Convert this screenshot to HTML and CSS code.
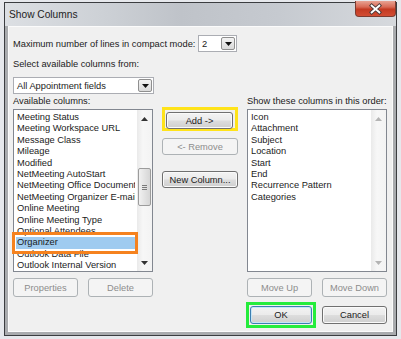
FILE: index.html
```html
<!DOCTYPE html>
<html lang="en">
<head>
    <meta charset="UTF-8">
    <meta name="viewport" content="width=device-width, initial-scale=1.0">
    <title>Show Columns</title>
    <link rel="stylesheet" href="styles.css">
</head>
<body>
    <div class="window">
        <div class="titlebar">
            <span class="title">Show Columns</span>
            <span class="close">
                <svg width="41" height="16" viewBox="0 0 41 16">
                    <path d="M16.5 4.5 L24.5 11.5 M24.5 4.5 L16.5 11.5" stroke="#4a3a3a" stroke-width="4" stroke-linecap="square"/>
                    <path d="M16.5 4.5 L24.5 11.5 M24.5 4.5 L16.5 11.5" stroke="#ffffff" stroke-width="2" stroke-linecap="square"/>
                </svg>
            </span>
        </div>

        <div class="client">
            <div class="compact-row">
                <span>Maximum number of lines in compact mode:</span>
                <div class="combo">
                    <span class="combo-text">2</span>
                    <span class="combo-btn"><svg width="7" height="4" viewBox="0 0 7 4"><path d="M0 0 H7 L3.5 4 Z" fill="#111"/></svg></span>
                </div>
            </div>

            <div class="caption caption-source">Select available columns from:</div>
            <div class="combo combo-wide">
                <span class="combo-text">All Appointment fields</span>
                <span class="combo-btn"><svg width="7" height="4" viewBox="0 0 7 4"><path d="M0 0 H7 L3.5 4 Z" fill="#111"/></svg></span>
            </div>

            <div class="columns">
                <div class="caption">Available columns:</div>
                <div></div>
                <div class="caption">Show these columns in this order:</div>

                <div class="listbox">
                    <ul class="items">
                        <li>Meeting Status</li>
                        <li>Meeting Workspace URL</li>
                        <li>Message Class</li>
                        <li>Mileage</li>
                        <li>Modified</li>
                        <li>NetMeeting AutoStart</li>
                        <li>NetMeeting Office Document</li>
                        <li>NetMeeting Organizer E-mail</li>
                        <li>Online Meeting</li>
                        <li>Online Meeting Type</li>
                        <li>Optional Attendees</li>
                        <li class="selected">Organizer</li>
                        <li>Outlook Data File</li>
                        <li>Outlook Internal Version</li>
                    </ul>
                    <div class="scrollbar">
                        <span class="arrow"><svg width="7" height="4" viewBox="0 0 7 4"><path d="M0 4 H7 L3.5 0 Z" fill="#333"/></svg></span>
                        <span class="track-top"></span>
                        <span class="thumb"><i></i><i></i><i></i></span>
                        <span class="track-rest"></span>
                        <span class="arrow"><svg width="7" height="4" viewBox="0 0 7 4"><path d="M0 0 H7 L3.5 4 Z" fill="#333"/></svg></span>
                    </div>
                    <div class="mark mark-orange"></div>
                </div>

                <div class="mid-buttons">
                    <div class="mark-yellow"><button class="btn">Add -&gt;</button></div>
                    <button class="btn" disabled>&lt;- Remove</button>
                    <button class="btn btn-new">New Column...</button>
                </div>

                <div class="listbox">
                    <ul class="items">
                        <li>Icon</li>
                        <li>Attachment</li>
                        <li>Subject</li>
                        <li>Location</li>
                        <li>Start</li>
                        <li>End</li>
                        <li>Recurrence Pattern</li>
                        <li>Categories</li>
                    </ul>
                    <div class="scrollbar off">
                        <span class="arrow"><svg width="7" height="4" viewBox="0 0 7 4"><path d="M0 4 H7 L3.5 0 Z" fill="#b4b4b4"/></svg></span>
                        <span class="track-rest"></span>
                        <span class="arrow"><svg width="7" height="4" viewBox="0 0 7 4"><path d="M0 0 H7 L3.5 4 Z" fill="#b4b4b4"/></svg></span>
                    </div>
                </div>

                <div class="btn-pair">
                    <button class="btn" disabled>Properties</button>
                    <button class="btn" disabled>Delete</button>
                </div>
                <div></div>
                <div class="btn-pair">
                    <button class="btn" disabled>Move Up</button>
                    <button class="btn" disabled>Move Down</button>
                </div>
            </div>

            <div class="footer">
                <div class="mark-green"><button class="btn btn-default">OK</button></div>
                <button class="btn btn-cancel">Cancel</button>
            </div>
        </div>
    </div>
</body>
</html>
```

FILE: styles.css
```css
body {
    margin: 0;
    background: #e6e8ec;
    font-family: "Liberation Sans", Arial, sans-serif;
    font-size: 9.3px;
    color: #1b1b1b;
}
.window {
    box-sizing: border-box;
    width: 393px;
    height: 334px;
    margin: 2px 0 0 4px;
    border: 1px solid #3b3d40;
    background: #a9abae;
    padding: 0 3px 3px;
}
.titlebar {
    height: 23px;
    margin: 0 -3px;
    padding-left: 4px;
    display: flex;
    justify-content: space-between;
    background: linear-gradient(to right, #dcdfe3 0%, #cdd1d6 25%, #bfc3c9 45%, #c6cad0 70%, #d6d9dd 100%);
}
.title {
    font-size: 10.2px;
    line-height: 23px;
    color: #1d1d1d;
}
.close {
    width: 41px;
    height: 16px;
    margin-top: -2px;
    border: 1px solid #7d3b30;
    border-top: none;
    box-sizing: border-box;
    border-radius: 0 0 4px 4px;
    background: linear-gradient(#e7a393 0%, #d86a55 40%, #c33a22 55%, #d24d33 100%);
    display: flex;
}
.client {
    box-sizing: border-box;
    height: 306px;
    border: 1px solid #fbfbfb;
    background: #f0f0f0;
    padding: 8px 5px 3px 4px;
}
.compact-row {
    display: grid;
    grid-template-columns: 185px 39px;
    align-items: center;
    height: 17px;
}
.caption {
    line-height: 12px;
    white-space: nowrap;
}
.caption-source {
    margin-top: 6px;
}
.combo {
    box-sizing: border-box;
    height: 17px;
    border: 1px solid #abadb3;
    background: #fff;
    display: flex;
    align-items: center;
    justify-content: space-between;
}
.combo-wide {
    width: 141px;
    margin-top: 7px;
}
.combo-text {
    padding-left: 3px;
}
.combo-btn {
    box-sizing: border-box;
    width: 14px;
    height: 13px;
    margin-right: 1px;
    border: 1px solid #8f8f8f;
    border-radius: 2px;
    background: linear-gradient(#f3f3f3, #dadada);
    display: flex;
    align-items: center;
    justify-content: center;
}
.columns {
    margin-top: 1px;
    display: grid;
    grid-template-columns: 140px 76px 140px;
    column-gap: 9px;
}
.columns > .caption {
    margin-bottom: 2px;
}
.listbox {
    position: relative;
    box-sizing: border-box;
    height: 163px;
    border: 1px solid #828790;
    background: #fff;
    display: flex;
}
.items {
    flex: 1;
    list-style: none;
    margin: 0;
    padding: 2px 2px 0 2px;
    overflow: hidden;
}
.items li {
    line-height: 11.4px;
    height: 11.4px;
    padding-left: 1px;
    white-space: nowrap;
    overflow: hidden;
}
.items li.selected {
    background: #9fcbf0;
}
.scrollbar {
    width: 15px;
    background: linear-gradient(to right, #eaeaea, #f7f7f7 40%, #f3f3f3);
    display: flex;
    flex-direction: column;
    align-items: center;
}
.scrollbar .arrow {
    height: 17px;
    display: flex;
    align-items: center;
    justify-content: center;
}
.track-top {
    height: 41px;
}
.track-rest {
    flex: 1;
}
.thumb {
    box-sizing: border-box;
    width: 13px;
    height: 38px;
    border: 1px solid #9c9c9c;
    border-radius: 2px;
    background: linear-gradient(to right, #f1f1f1, #e3e3e3 50%, #d6d6d6);
    display: flex;
    flex-direction: column;
    align-items: center;
    justify-content: center;
    gap: 1px;
}
.thumb i {
    width: 5px;
    height: 1px;
    background: #7a7a7a;
}
.mark {
    position: absolute;
    box-sizing: border-box;
}
.mark-orange {
    left: -2px;
    top: 122px;
    width: 126px;
    height: 22px;
    border: 3px solid #f5821f;
}
.mid-buttons {
    margin-top: -2px;
    display: flex;
    flex-direction: column;
}
.mark-yellow {
    border: 3px solid #ffe31a;
    padding: 2px 2px 0 1px;
    height: 24px;
    box-sizing: border-box;
}
.mark-yellow .btn {
    width: 100%;
    height: 17px;
}
.btn {
    box-sizing: border-box;
    height: 17px;
    border: 1px solid #707070;
    border-radius: 3px;
    background: linear-gradient(#f3f3f3 0%, #ebebeb 48%, #dddddd 52%, #cfcfcf 100%);
    box-shadow: inset 0 0 0 1px #fafafa;
    font: inherit;
    color: #1b1b1b;
    padding: 0;
}
.btn:disabled {
    border-color: #adb2b5;
    background: #f4f4f4;
    box-shadow: none;
    color: #8d8d8d;
}
.mid-buttons > .btn {
    margin-top: 7px;
}
.mid-buttons > .btn-new {
    margin-top: 16px;
}
.btn-pair {
    margin-top: 6px;
    display: flex;
    justify-content: space-between;
}
.btn-pair .btn {
    width: 65px;
    height: 19px;
}
.footer {
    margin-top: 5px;
    display: flex;
    justify-content: flex-end;
    align-items: center;
    gap: 6px;
}
.mark-green {
    box-sizing: border-box;
    width: 70px;
    height: 26px;
    border: 3px solid #25ec3c;
    padding: 1px;
}
.btn-default {
    width: 100%;
    height: 18px;
    border-color: #3c7fb1;
    box-shadow: inset 0 0 0 1px #c5e5f7;
}
.btn-cancel {
    width: 65px;
    height: 18px;
}
```
